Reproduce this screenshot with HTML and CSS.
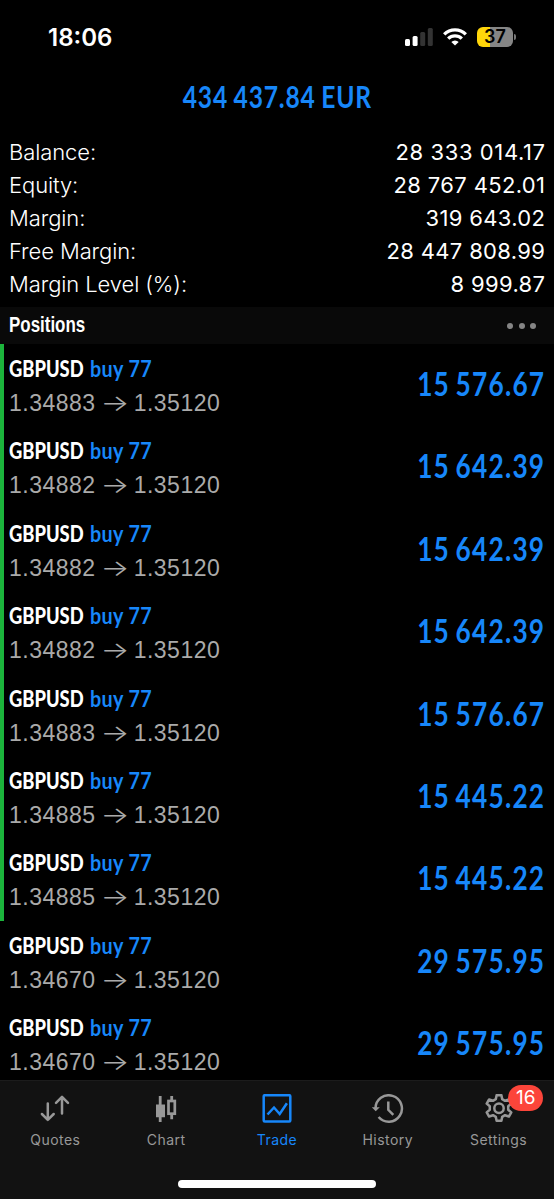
FILE: index.html
```html
<!DOCTYPE html>
<html lang="en">
<head>
<meta charset="utf-8">
<title>Trade</title>
<link rel="stylesheet" href="styles.css">
</head>
<body>
<div class="app">
  <header class="status">
    <span class="clock">18:06</span>
    <div class="status-icons">
      <svg class="signal" width="28" height="18" viewBox="0 0 28 18"><rect x="0" y="11" width="5" height="7" rx="1.5" fill="#fff"/><rect x="7.6" y="8" width="5" height="10" rx="1.5" fill="#fff"/><rect x="15.2" y="4" width="5" height="14" rx="1.5" fill="#333"/><rect x="22.8" y="0" width="5" height="18" rx="1.5" fill="#333"/></svg>
      <svg class="wifi" width="24" height="18" viewBox="0 0 24 18"><g fill="none" stroke="#fff" stroke-width="3.3"><path d="M1.2 6.4a15.2 15.2 0 0 1 21.6 0"/><path d="M5.2 10.700a9.600 9.600 0 0 1 13.600 0"/></g><path d="M12 17.600l-3.700-3.700a5.300 5.300 0 0 1 7.400 0z" fill="#fff"/></svg>
      <div class="battery"><span class="battery-level">37</span><i class="battery-tip"></i></div>
    </div>
  </header>
  <h1 class="profit-total"><span>434 437.84 EUR</span></h1>
  <dl class="summary">
    <div><dt>Balance:</dt><dd class="wide">28 333 014.17</dd></div>
    <div><dt>Equity:</dt><dd>28 767 452.01</dd></div>
    <div><dt>Margin:</dt><dd>319 643.02</dd></div>
    <div><dt>Free Margin:</dt><dd>28 447 808.99</dd></div>
    <div><dt>Margin Level (%):</dt><dd>8 999.87</dd></div>
  </dl>
  <div class="section-head"><h2>Positions</h2><div class="more"><i></i><i></i><i></i></div></div>
  <main class="positions">
    <div class="row marked"><div class="deal"><div class="name"><b>GBPUSD</b><em>buy 77</em></div><div class="price">1.34883<span class="arrow">→</span>1.35120</div></div><div class="gain">15 576.67</div></div>
    <div class="row marked"><div class="deal"><div class="name"><b>GBPUSD</b><em>buy 77</em></div><div class="price">1.34882<span class="arrow">→</span>1.35120</div></div><div class="gain">15 642.39</div></div>
    <div class="row marked"><div class="deal"><div class="name"><b>GBPUSD</b><em>buy 77</em></div><div class="price">1.34882<span class="arrow">→</span>1.35120</div></div><div class="gain">15 642.39</div></div>
    <div class="row marked"><div class="deal"><div class="name"><b>GBPUSD</b><em>buy 77</em></div><div class="price">1.34882<span class="arrow">→</span>1.35120</div></div><div class="gain">15 642.39</div></div>
    <div class="row marked"><div class="deal"><div class="name"><b>GBPUSD</b><em>buy 77</em></div><div class="price">1.34883<span class="arrow">→</span>1.35120</div></div><div class="gain">15 576.67</div></div>
    <div class="row marked"><div class="deal"><div class="name"><b>GBPUSD</b><em>buy 77</em></div><div class="price">1.34885<span class="arrow">→</span>1.35120</div></div><div class="gain">15 445.22</div></div>
    <div class="row marked"><div class="deal"><div class="name"><b>GBPUSD</b><em>buy 77</em></div><div class="price">1.34885<span class="arrow">→</span>1.35120</div></div><div class="gain">15 445.22</div></div>
    <div class="row"><div class="deal"><div class="name"><b>GBPUSD</b><em>buy 77</em></div><div class="price">1.34670<span class="arrow">→</span>1.35120</div></div><div class="gain">29 575.95</div></div>
    <div class="row"><div class="deal"><div class="name"><b>GBPUSD</b><em>buy 77</em></div><div class="price">1.34670<span class="arrow">→</span>1.35120</div></div><div class="gain">29 575.95</div></div>
  </main>
  <footer class="bottom">
    <nav class="tabs">
      <a class="tab"><svg width="34" height="34" viewBox="0 0 34 34"><g fill="none" stroke="currentColor" stroke-width="2.500" stroke-linecap="round" stroke-linejoin="round"><path d="M9.800 9.500v16.200M3.900 20l5.900 5.900 5.900-5.900M24 19.400V3M18 8.800l6-6 6 6"/></g></svg><span>Quotes</span></a>
      <a class="tab"><svg width="34" height="34" viewBox="0 0 34 34"><g transform="translate(0 1)"><path d="M9.800 1h2.800v8.500h3.400v12.800h-3.400V27H9.800v-4.700H7V9.500h2.800z" fill="currentColor"/><path d="M22.700 1v4.500M22.700 19v5.200" stroke="currentColor" stroke-width="2.800"/><rect x="19.500" y="6" width="6.300" height="12.700" fill="none" stroke="currentColor" stroke-width="2.700"/></g></svg><span>Chart</span></a>
      <a class="tab active"><svg width="34" height="34" viewBox="0 0 34 34"><g fill="none" stroke="currentColor" stroke-width="2.500"><rect x="3.700" y="1.200" width="26.600" height="26.300" rx="1"/><path d="M7.500 20.500l6.500-7 5.700 6.500 7.200-10.800"/></g></svg><span>Trade</span></a>
      <a class="tab"><svg width="34" height="34" viewBox="0 0 34 34"><g fill="none" stroke="currentColor" stroke-width="2.500"><path d="M4.500 14.400A13.200 13.200 0 1 1 7.600 23"/><path d="M17.300 7.500v8.300l5 5"/></g><path d="M.8 13.200h8l-4.100 4z" fill="currentColor"/></svg><span>History</span></a>
      <a class="tab"><svg width="34" height="34" viewBox="0 0 34 34"><g fill="none" stroke="currentColor" stroke-width="2.500" stroke-linejoin="round"><path d="M14.600 1.200h4.800l.8 4 2.800 1.600 3.900-1.300 2.400 4.100-3.100 2.700v3.400l3.100 2.700-2.400 4.100-3.900-1.300-2.800 1.600-.8 4h-4.800l-.8-4-2.800-1.600-3.900 1.300-2.400-4.100 3.100-2.700v-3.400l-3.100-2.700 2.400-4.100 3.900 1.300 2.800-1.600z"/><circle cx="17" cy="14.300" r="4.700"/></g></svg><span>Settings</span><strong class="badge">16</strong></a>
    </nav>
    <div class="home-bar"></div>
  </footer>
</div>
</body>
</html>
```
FILE: styles.css
```css
* { box-sizing: border-box; }
body { margin: 0; background: #000; color: #fff; font-family: Inter, sans-serif; }
h1, h2, dl, dd { margin: 0; }
i, em { font-style: normal; }
.app { width: 554px; height: 1199px; display: flex; flex-direction: column; overflow: hidden; }

.status { height: 73px; display: flex; justify-content: space-between; padding: 0 41px 0 48px; align-items: center; }
.clock { font-size: 24px; font-weight: 600; line-height: 30px; letter-spacing: 0; padding-top: 2px; }
.status-icons { display: flex; align-items: center; gap: 10px; padding-top: 1px; }
.battery { position: relative; width: 36px; height: 20px; border-radius: 6px; background: linear-gradient(90deg, #ffd60a 13px, #858585 13px); text-align: center; color: #000; font-size: 18px; line-height: 20px; font-weight: 600; }
.battery-tip { position: absolute; left: 37px; top: 7px; width: 2px; height: 6px; border-radius: 0 2px 2px 0; background: #777; }

.profit-total { height: 63px; text-align: center; font: 700 30px/46px Lato, sans-serif; color: #1787fa; letter-spacing: 1px; word-spacing: -1.500px; }
.profit-total span { display: inline-block; transform: scaleX(0.82); }

.summary { height: 171px; padding: 0 9px; }
.summary div { display: flex; justify-content: space-between; height: 33.100px; line-height: 33px; font-size: 22px; }
.summary dt { font-weight: 350; letter-spacing: -0.100px; }
.summary dd { letter-spacing: 0.350px; margin-right: -0.350px; }
.summary dd.wide { letter-spacing: 0.600px; margin-right: -0.600px; }

.section-head { height: 37px; flex: none; background: #090909; display: flex; align-items: center; justify-content: space-between; padding: 0 18px 0 9px; }
.section-head h2 { font: 700 22px/35px "Liberation Sans", sans-serif; height: 37px; transform: scaleX(0.77); transform-origin: left; }
.more { display: flex; gap: 5.400px; }
.more i { width: 6px; height: 6px; border-radius: 50%; background: #858585; }

.positions { height: 736px; overflow: hidden; }
.row { height: 82.400px; display: flex; justify-content: space-between; padding: 7px 10px 0 5px; border-left: 4px solid transparent; }
.row.marked { border-left-color: #1cb43c; }
.name { display: flex; height: 35px; font: 700 23.500px/34px Lato, sans-serif; }
.name b { width: 81px; transform: scaleX(0.780); transform-origin: left; }
.name em { color: #1787fa; transform: scaleX(0.840); transform-origin: left; white-space: nowrap; letter-spacing: 0.400px; }
.price { display: flex; font: 400 23px/34px "Liberation Sans", sans-serif; letter-spacing: 0.500px; color: #aaa; }
.arrow { width: 38px; text-align: center; font-family: Inter, sans-serif; font-weight: 300; letter-spacing: 0; transform: scaleX(1.320); }
.gain { font: 700 32px/66px Lato, sans-serif; color: #1787fa; letter-spacing: 1.500px; word-spacing: -2.500px; margin-right: -1px; transform: scaleX(0.820); transform-origin: right; }

.bottom { height: 119px; background: #121212; border-top: 1px solid #1c1c1c; }
.tabs { display: grid; grid-template-columns: repeat(5, 1fr); height: 99px; padding-top: 13px; }
.tab { position: relative; display: flex; flex-direction: column; align-items: center; color: #989898; font-size: 14px; line-height: 20px; letter-spacing: 0.450px; }
.tab svg { margin-bottom: 2px; }
.tab.active { color: #1787fa; }
.badge { position: absolute; left: 65px; top: -9px; width: 35px; height: 26px; border-radius: 13px; background: #fc453a; color: #fff; text-align: center; font-size: 19px; font-weight: 400; line-height: 25px; letter-spacing: 0; }
.home-bar { width: 198px; height: 8px; border-radius: 4px; background: #fff; margin: 0 auto; }
```
